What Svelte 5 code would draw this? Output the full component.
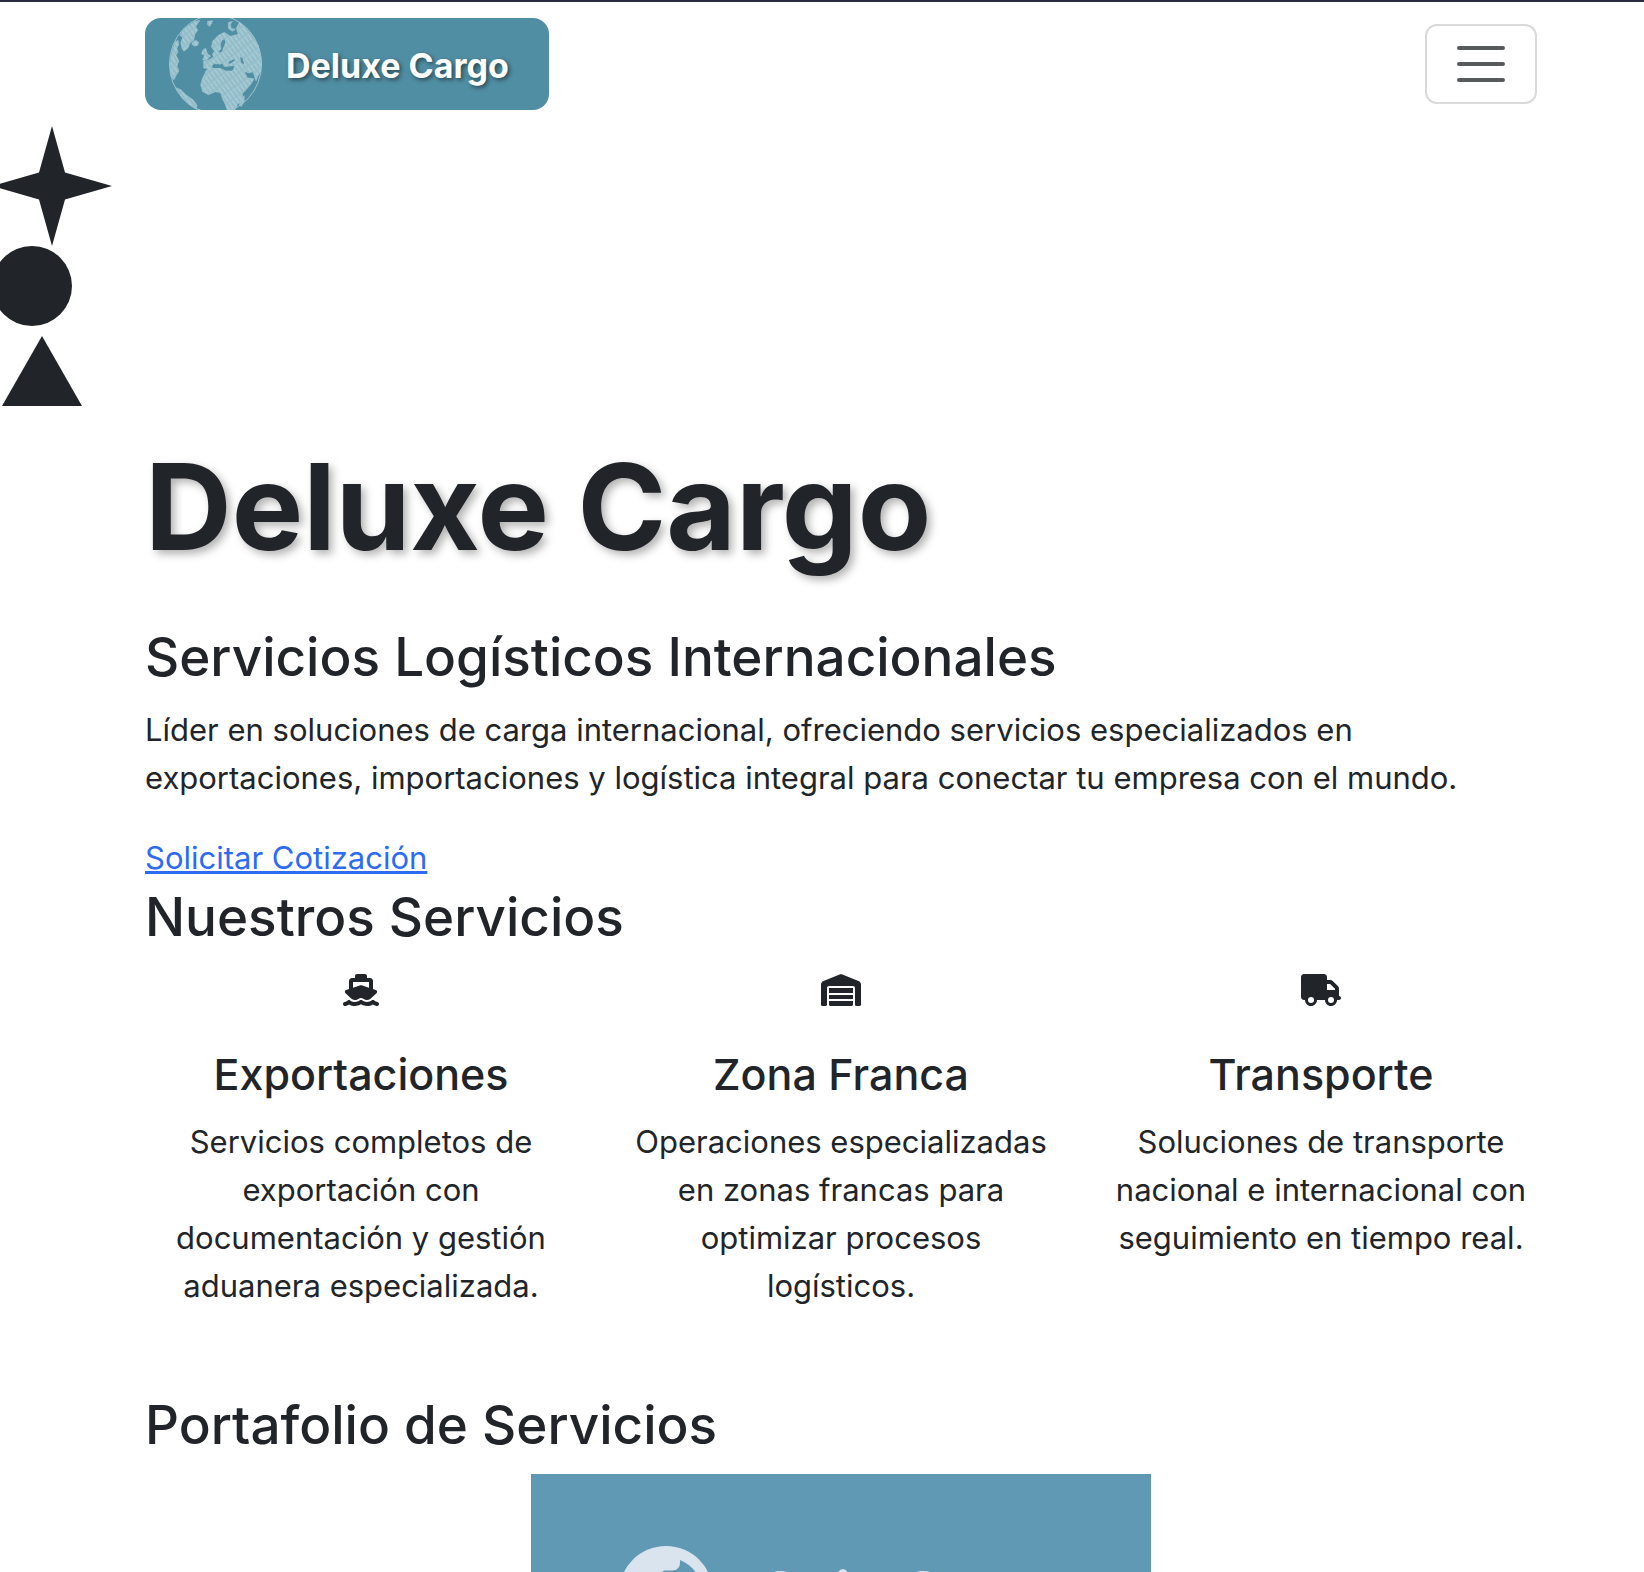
<script>
  const services = [
    {
      title: 'Exportaciones',
      text: 'Servicios completos de exportación con documentación y gestión aduanera especializada.',
      box: '0 0 576 512',
      width: 36,
      path: 'M192 32c0-17.7 14.3-32 32-32H352c17.7 0 32 14.3 32 32V64h48c26.500 0 48 21.500 48 48V240l44.400 14.800c23.100 7.700 29.500 37.500 11.500 53.900l-101 92.600c-16.200 9.400-34.700 15.100-50.900 15.100c-19.600 0-40.800-7.700-59.200-20.300c-22.100-15.500-51.600-15.500-73.700 0c-17.100 11.800-38 20.300-59.200 20.300c-16.200 0-34.700-5.700-50.900-15.100l-101-92.600c-18-16.500-11.600-46.200 11.500-53.900L96 240V112c0-26.500 21.500-48 48-48h48V32zM160 218.700l107.800-35.900c13.100-4.400 27.300-4.400 40.500 0L416 218.700V128H160v90.700zM306.500 421.900C329 437.400 356.500 448 384 448c26.900 0 55.400-10.800 77.400-26.100l0 0c11.900-8.500 28.100-7.800 39.200 1.700c14.400 11.900 32.500 21 50.600 25.200c17.200 4 27.900 21.200 23.900 38.400s-21.200 27.900-38.400 23.900c-24.500-5.700-44.900-16.500-58.200-25C449.500 501.700 417 512 384 512c-31.900 0-60.600-9.900-80.400-18.900c-5.800-2.700-11.100-5.300-15.600-7.700c-4.500 2.400-9.700 5.100-15.600 7.700c-19.800 9-48.500 18.900-80.400 18.900c-33 0-65.500-10.300-94.500-25.800c-13.400 8.400-33.700 19.300-58.200 25c-17.200 4-34.400-6.700-38.400-23.900s6.700-34.400 23.900-38.400c18.100-4.200 36.200-13.300 50.600-25.200c11.100-9.400 27.300-10.100 39.200-1.700l0 0C136.700 437.200 165.100 448 192 448c27.500 0 55-10.600 77.500-26.100c11.100-7.900 25.900-7.900 37 0z'
    },
    {
      title: 'Zona Franca',
      text: 'Operaciones especializadas en zonas francas para optimizar procesos logísticos.',
      box: '0 0 640 512',
      width: 40,
      path: 'M0 488V171.300c0-26.200 15.900-49.700 40.200-59.400L308.100 4.800c7.600-3.100 16.100-3.100 23.800 0L599.800 111.900c24.300 9.700 40.200 33.300 40.200 59.400V488c0 13.300-10.700 24-24 24H568c-13.300 0-24-10.700-24-24V224c0-17.700-14.300-32-32-32H128c-17.700 0-32 14.300-32 32V488c0 13.300-10.700 24-24 24H24c-13.300 0-24-10.700-24-24zM152 512c-13.300 0-24-10.700-24-24V432H512v56c0 13.300-10.700 24-24 24H152zM128 336H512v64H128V336zM128 304V224H512v80H128z'
    },
    {
      title: 'Transporte',
      text: 'Soluciones de transporte nacional e internacional con seguimiento en tiempo real.',
      box: '0 0 640 512',
      width: 40,
      path: 'M48 0C21.500 0 0 21.500 0 48V368c0 26.500 21.500 48 48 48H64c0 53 43 96 96 96s96-43 96-96H384c0 53 43 96 96 96s96-43 96-96h32c17.700 0 32-14.300 32-32s-14.300-32-32-32V237.300c0-17-6.700-33.300-18.700-45.300L512 114.700c-12-12-28.300-18.700-45.300-18.700H416V48c0-26.500-21.500-48-48-48H48zM416 160h50.700L544 237.300V256H416V160zM112 416a48 48 0 1 1 96 0 48 48 0 1 1-96 0zm368-48a48 48 0 1 1 0 96 48 48 0 1 1 0-96z'
    }
  ];
</script>

<div class="page">
  <header>
    <a class="brand" href="#inicio">
      <svg class="globe" viewBox="0 0 94 100" aria-hidden="true">
        <defs>
          <pattern id="hatch" width="4" height="9" patternUnits="userSpaceOnUse" patternTransform="rotate(-36)">
            <rect width="4" height="9" fill="#98c0cc" />
            <path d="M0.800 0V7" stroke="#b4d4dc" stroke-width="0.800" />
            <path d="M2.800 2V9" stroke="#84b3c1" stroke-width="0.600" />
          </pattern>
        </defs>
        <ellipse cx="47" cy="50" rx="46.500" ry="49.500" fill="none" stroke="#a9cbd4" stroke-width="0.900" />
        <g fill="url(#hatch)" stroke="#a5cbd5" stroke-width="0.500">
          <path d="M31 6L26 7 20 11 15 15 11 21 14 23 12 28 13 34 15 37 19 34 21 29 25 26 26 20 29 16 27 12Z" />
          <path d="M6 28L9 26 10 30 8 34 9 38 7 41 10 47 8 52 10 57 7 62 5 66 2 62 1 52 2 42Z" />
          <path d="M24 28L27 26 30 28 29 31 26 32 23 30Z" />
          <path d="M39 7L44 6 43 9 41 12 39 10Z" />
          <path d="M60 8L64 7 62 10 63 14 67 15 64 17 60 14Z" />
          <path d="M7 74L12 76 17 81 24 86 28 91 28 96 20 91 13 84Z" />
          <path d="M34 36L37 34 39 40 42 42 38 46 34 46 36 41 33 40Z" />
          <path d="M44 40L46 37 43 33 44 27 50 21 56 18 62 22 70 20 68 14 71 8 77 13 84 21 90 31 93 43 93 57 90 62 88 67 85 58 80 59 76 57 79 64 86 65 83 70 78 76 74 80 75 86 69 91 66 98 59 97 57 91 54 85 52 79 47 78 40 81 34 78 32 71 34 64 38 56 43 53 53 53 57 57 64 57 66 54 57 55 54 49 49 52 46 49 41 55 35 54 35 47 40 46 45 43Z" />
          <path d="M73 86L76 82 76 88 73 93 71 91Z" />
        </g>
        <g fill="#508ea3">
          <path d="M54 26L52 30 53 34 50 38 53 38 55 33 57 28 56 25Z" />
          <path d="M60 48L66 45 66 47 61 50Z" />
          <path d="M72 43L74 44 76 50 73 49Z" />
          <path d="M44 51L50 50 55 53 66 52 65 55 56 56 52 54 44 54Z" />
        </g>
      </svg>
      <span>Deluxe Cargo</span>
    </a>
    <button class="toggler" type="button" aria-label="Abrir menú">
      <svg viewBox="0 0 30 30" aria-hidden="true">
        <path d="M4 7h22M4 15h22M4 23h22" />
      </svg>
    </button>
  </header>

  <svg class="shapes" viewBox="0 0 112 280" aria-hidden="true">
    <path d="M52 0L65 46.500 112 60 65 73.500 52 120 39 73.500-8 60 39 46.500Z" />
    <circle cx="32" cy="160" r="40" />
    <path d="M42 210L82 280H2Z" />
  </svg>

  <main>
    <section>
      <h1>Deluxe Cargo</h1>
      <h2>Servicios Logísticos Internacionales</h2>
      <p>Líder en soluciones de carga internacional, ofreciendo servicios especializados en exportaciones, importaciones y logística integral para conectar tu empresa con el mundo.</p>
      <a class="quote" href="#cotizacion">Solicitar Cotización</a>
    </section>

    <section>
      <h2>Nuestros Servicios</h2>
      <div class="services">
        {#each services as service}
          <article>
            <svg viewBox={service.box} width={service.width} height="32" aria-hidden="true">
              <path d={service.path} />
            </svg>
            <h3>{service.title}</h3>
            <p>{service.text}</p>
          </article>
        {/each}
      </div>
    </section>

    <section class="portfolio">
      <h2>Portafolio de Servicios</h2>
      <div class="slide">
        <svg class="mark" viewBox="0 0 94 94" aria-hidden="true">
          <circle cx="47" cy="47" r="47" />
          <path class="sea" d="M61 14Q62 24 53 24.500H45L42 27V44H84Q80 22 61 14Z" />
        </svg>
        <span>Ship Cargo</span>
      </div>
    </section>
  </main>
</div>

<style>
  :global(body) {
    margin: 0;
    background: #fff;
  }
  .page {
    box-sizing: border-box;
    height: 100vh;
    overflow: hidden;
    border-top: 2px solid #2b2b40;
    color: #212529;
    font: 400 31px/48px Inter, "Liberation Sans", sans-serif;
  }
  header {
    display: flex;
    align-items: center;
    justify-content: space-between;
    padding: 16px 107px 16px 145px;
  }
  .brand {
    display: flex;
    align-items: center;
    gap: 24px;
    height: 92px;
    padding: 0 40px 0 24px;
    overflow: hidden;
    border-radius: 16px;
    background: #508ea3;
    color: #fff;
    font-size: 34px;
    font-weight: 700;
    text-decoration: none;
    text-shadow: 2px 2px 4px rgba(0, 0, 0, 0.5);
  }
  .brand span {
    padding-top: 4px;
  }
  .globe {
    width: 93px;
    height: 100px;
  }
  .toggler {
    display: flex;
    align-items: center;
    justify-content: center;
    box-sizing: border-box;
    width: 112px;
    height: 80px;
    padding: 0;
    border: 2px solid #d9d9da;
    border-radius: 12px;
    background: #fff;
  }
  .toggler svg {
    width: 60px;
    height: 60px;
    fill: none;
    stroke: #585b5e;
    stroke-width: 2;
    stroke-linecap: round;
  }
  .shapes {
    display: block;
    width: 112px;
    height: 280px;
    fill: #212529;
  }
  main {
    padding: 24px 107px 0 145px;
  }
  h1,
  h2,
  h3,
  p {
    margin: 0;
  }
  h1 {
    margin-bottom: 38px;
    font-size: 120px;
    font-weight: 700;
    line-height: 154px;
    text-shadow: 4px 4px 8px rgba(0, 0, 0, 0.3);
  }
  h2 {
    margin-bottom: 14px;
    font-size: 53px;
    font-weight: 500;
    line-height: 70px;
  }
  .quote {
    display: inline-block;
    margin-top: 32px;
    color: #2c6bf2;
    text-decoration-thickness: 3px;
  }
  .services {
    display: grid;
    grid-template-columns: repeat(3, 1fr);
    column-gap: 48px;
    padding-top: 8px;
  }
  article {
    display: flex;
    flex-direction: column;
    align-items: center;
    text-align: center;
  }
  article svg {
    fill: #212529;
  }
  h3 {
    margin: 40px 0 16px;
    font-size: 43px;
    font-weight: 500;
    line-height: 56px;
  }
  .portfolio {
    margin-top: 80px;
  }
  .slide {
    display: flex;
    align-items: flex-start;
    gap: 48px;
    box-sizing: border-box;
    width: 620px;
    height: 400px;
    margin: 0 auto;
    padding: 72px 88px;
    background: #6099b4;
    color: #d9e4ef;
  }
  .slide span {
    padding-top: 18px;
    font-size: 58px;
    font-weight: 700;
    line-height: 58px;
    white-space: nowrap;
  }
  .mark {
    flex: none;
    width: 94px;
    height: 94px;
    fill: #d9e4ef;
  }
  .sea {
    fill: #6099b4;
  }
</style>
